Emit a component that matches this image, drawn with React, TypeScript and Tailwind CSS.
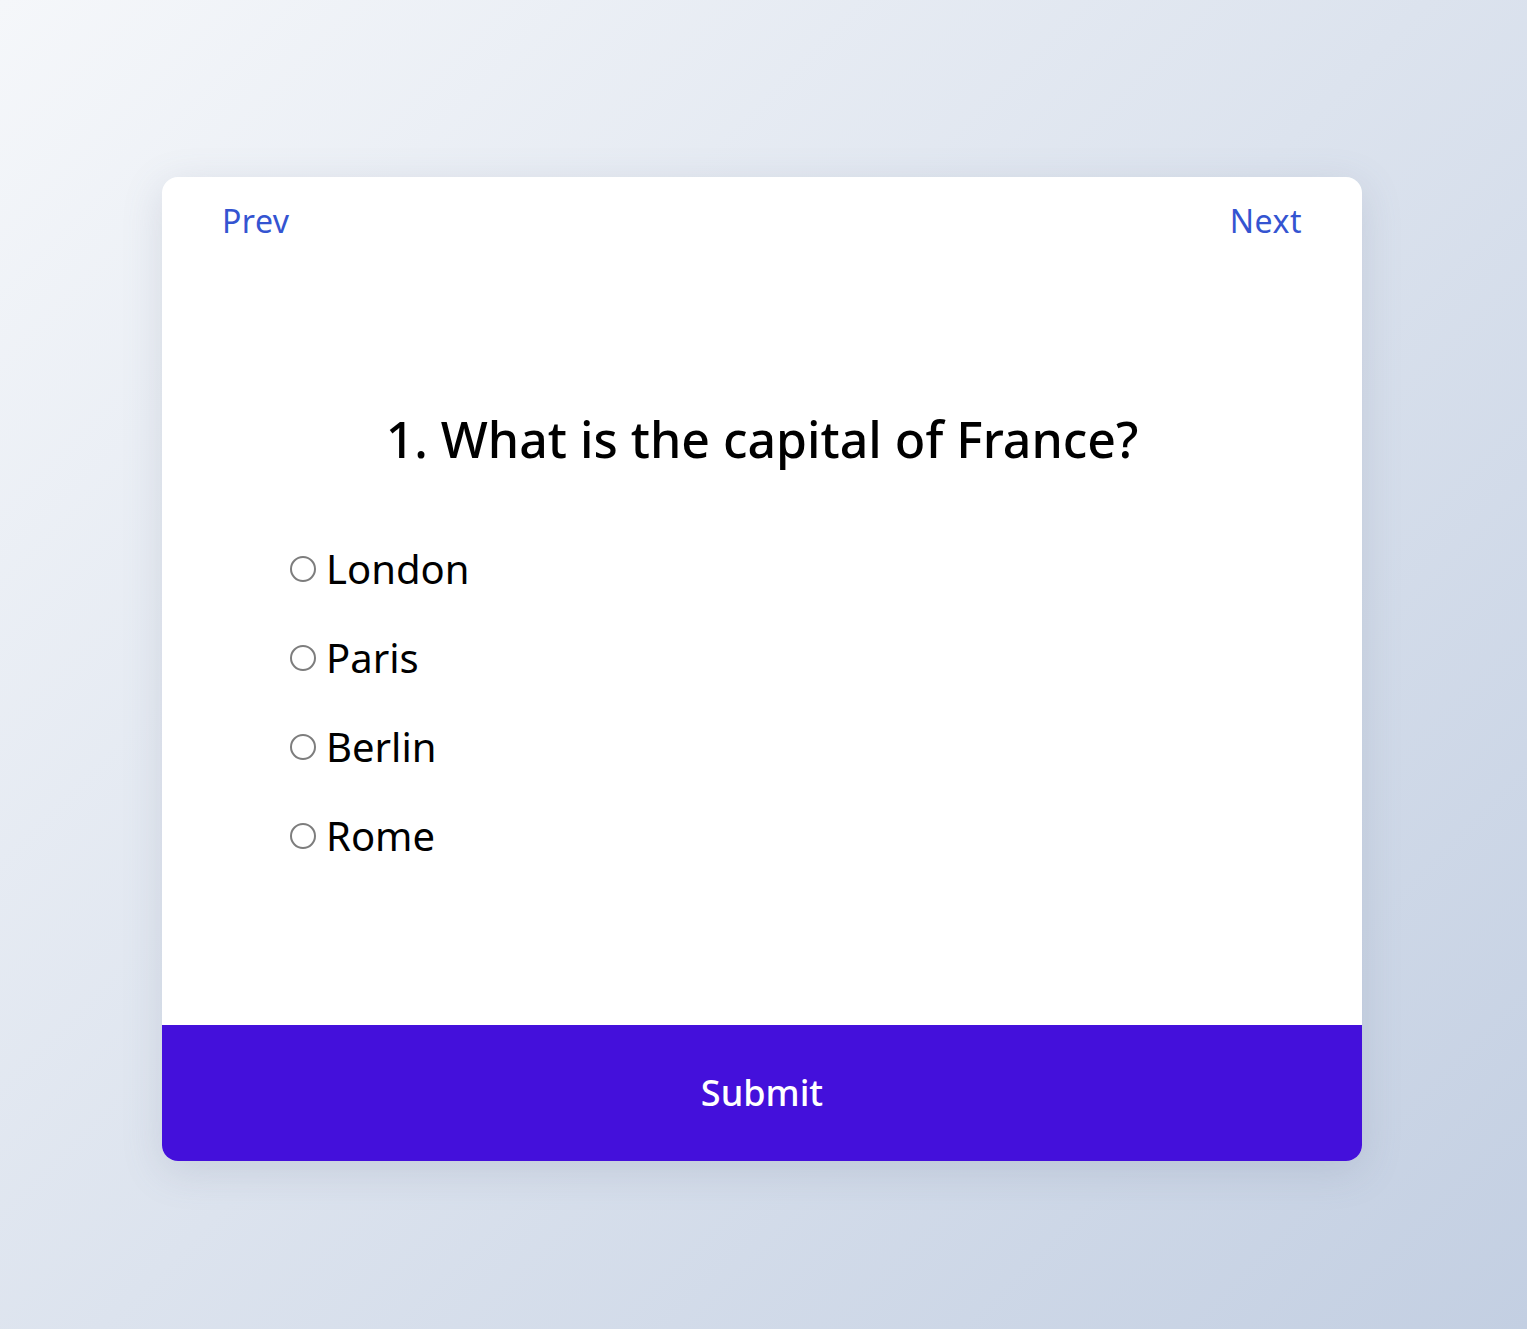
import React from "react";

const options = ["London", "Paris", "Berlin", "Rome"];

export default function App() {
  return (
    <div
      className="w-full h-[1329px] bg-[linear-gradient(135deg,#f5f7fa_0%,#c3cfe2_100%)] pt-[177px] pl-[162px]"
      style={{ fontFamily: '"Noto Sans", "Open Sans", sans-serif' }}
    >
      <div className="w-[1200px] h-[984px] bg-white rounded-[16px] shadow-[0_10px_40px_rgba(100,110,140,0.18)] flex flex-col overflow-hidden">
        <div className="flex justify-between px-[60px] pt-[22px] text-[32px] tracking-[0.5px] leading-[44px] text-[#3454d1]">
          <span>Prev</span>
          <span>Next</span>
        </div>
        <h1 className="mt-[165px] text-center text-[50px] leading-[62px] font-medium text-black">
          1. What is the capital of France?
        </h1>
        <div className="mt-[73px] pl-[128px] flex flex-col gap-[38px]">
          {options.map((o) => (
            <label key={o} className="flex items-center h-[51px] text-[40px] text-black">
              <span className="w-[26px] h-[26px] rounded-full border-[2px] border-[#7d7d7d] bg-white mr-[10px] shrink-0" />
              <span>{o}</span>
            </label>
          ))}
        </div>
        <button className="mt-auto h-[136px] w-full bg-[#4410db] text-white text-[36px] font-medium">
          Submit
        </button>
      </div>
    </div>
  );
}
